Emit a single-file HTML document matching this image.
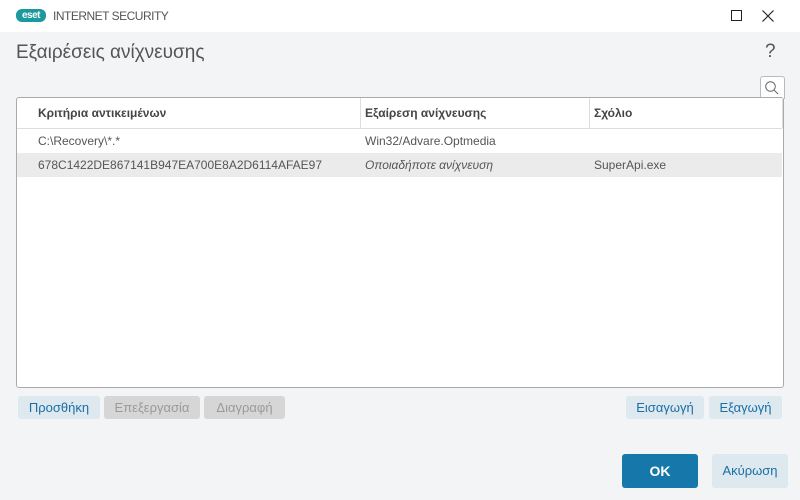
<!DOCTYPE html>
<html><head><style>
body{margin:0;width:800px;height:500px;background:#f3f4f6;font-family:"Liberation Sans","DejaVu Sans",sans-serif;position:relative;overflow:hidden}
.a{position:absolute}
.btn{position:absolute;border-radius:3px;font-size:13px;text-align:center;background:#dde8ef;color:#1a6fa6}
.dis{background:#d6d6d6;color:#9a9a9a}
.cell{position:absolute;font-size:12px;color:#555}
</style></head><body>
<div class="a" style="left:0;top:0;width:800px;height:32px;background:#fff"></div>
<div class="a" style="left:16px;top:9px;width:30px;height:13px;background:#1a9a9e;border-radius:6px;color:#fff;font-size:10px;font-weight:bold;line-height:13px;text-align:center;letter-spacing:-0.5px">eset</div>
<div class="a" style="left:53px;top:9px;font-size:12px;color:#555;letter-spacing:-0.5px">INTERNET SECURITY</div>
<div class="a" style="left:731px;top:10px;width:9px;height:9px;border:1px solid #222"></div>
<svg class="a" style="left:762px;top:10px" width="12" height="12"><path d="M0.5 0.5L11.5 11.5M11.5 0.5L0.5 11.5" stroke="#222" stroke-width="1.2"/></svg>
<div class="a" style="left:16px;top:42px;font-size:19px;color:#555">Εξαιρέσεις ανίχνευσης</div>
<div class="a" style="left:765px;top:41px;font-size:19px;color:#555">?</div>
<div class="a" style="left:760px;top:76px;width:23px;height:22px;background:#fff;border:1px solid #bbb;border-bottom:none;border-radius:3px 3px 0 0"></div>
<svg class="a" style="left:764px;top:80px" width="18" height="18"><circle cx="6.5" cy="6.5" r="4.8" fill="none" stroke="#666" stroke-width="1"/><line x1="10" y1="10" x2="14" y2="14" stroke="#666" stroke-width="1"/></svg>
<div class="a" style="left:16px;top:97px;width:766px;height:289px;background:#fff;border:1px solid #aaa;border-radius:3px"></div>
<div class="a" style="left:17px;top:128px;width:765px;height:1px;background:#ddd"></div>
<div class="a" style="left:360px;top:98px;width:1px;height:30px;background:#ddd"></div>
<div class="a" style="left:589px;top:98px;width:1px;height:30px;background:#ddd"></div>
<div class="a" style="left:782px;top:98px;width:1px;height:30px;background:#ddd"></div>
<div class="cell" style="left:38px;top:106px;font-weight:bold;color:#444">Κριτήρια αντικειμένων</div>
<div class="cell" style="left:365px;top:106px;font-weight:bold;color:#444">Εξαίρεση ανίχνευσης</div>
<div class="cell" style="left:594px;top:106px;font-weight:bold;color:#444">Σχόλιο</div>
<div class="cell" style="left:38px;top:134px">C:\Recovery\*.*</div>
<div class="cell" style="left:365px;top:134px">Win32/Advare.Optmedia</div>
<div class="a" style="left:17px;top:153px;width:765px;height:24px;background:#ebebeb"></div>
<div class="cell" style="left:38px;top:158px">678C1422DE867141B947EA700E8A2D6114AFAE97</div>
<div class="cell" style="left:365px;top:158px;font-style:italic">Οποιαδήποτε ανίχνευση</div>
<div class="cell" style="left:594px;top:158px">SuperApi.exe</div>
<div class="btn" style="left:18px;top:396px;width:82px;height:23px;line-height:23px">Προσθήκη</div>
<div class="btn dis" style="left:104px;top:396px;width:96px;height:23px;line-height:23px">Επεξεργασία</div>
<div class="btn dis" style="left:204px;top:396px;width:81px;height:23px;line-height:23px">Διαγραφή</div>
<div class="btn" style="left:626px;top:396px;width:78px;height:23px;line-height:23px">Εισαγωγή</div>
<div class="btn" style="left:709px;top:396px;width:73px;height:23px;line-height:23px">Εξαγωγή</div>
<div class="btn" style="left:622px;top:454px;width:76px;height:34px;line-height:34px;background:#1677ab;color:#fff;font-weight:bold;font-size:14px">OK</div>
<div class="btn" style="left:712px;top:454px;width:76px;height:34px;line-height:34px">Ακύρωση</div>
</body></html>
